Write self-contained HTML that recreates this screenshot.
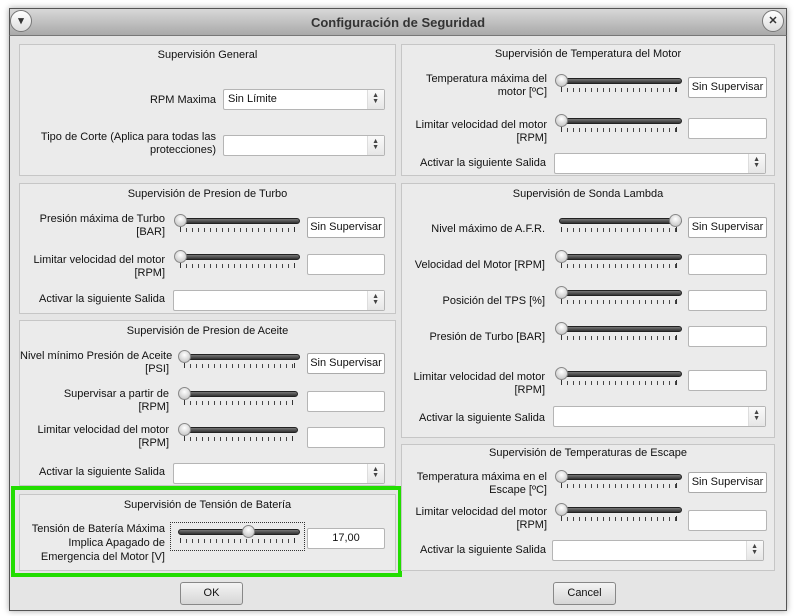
<!DOCTYPE html>
<html><head><meta charset="utf-8"><style>
*{box-sizing:border-box;margin:0;padding:0}
body{width:794px;height:616px;background:#fff;font-family:"Liberation Sans",sans-serif;font-size:11px;color:#111;position:relative;overflow:hidden}
.win{position:absolute;left:9px;top:8px;width:778px;height:603px;border:1px solid #555;background:#e5e5e5;box-shadow:0 0 6px rgba(0,0,0,.35)}
.title{position:absolute;left:9px;top:8px;width:778px;height:28px;background:linear-gradient(#d8d8d8,#a9a9a9);border:1px solid #555;border-bottom:1px solid #777;text-align:center;line-height:27px;font-weight:bold;font-size:13px;color:#333}
.circ{position:absolute;width:22px;height:22px;border-radius:50%;background:linear-gradient(#fff,#ddd);border:1px solid #777;text-align:center;line-height:20px;font-size:11px;color:#333;font-weight:bold}
.g{position:absolute;border:1px solid #c6c6c6;background:#ebebeb}
.gt{position:absolute;text-align:center;white-space:nowrap}
.l{position:absolute;text-align:right;line-height:13px;white-space:nowrap;top:0}
.cb{position:absolute;background:#fff;border:1px solid #b5b5b5;border-radius:2px;padding-left:4px;line-height:19px}
.cb:after{content:"";position:absolute;right:0;top:0;width:16px;height:100%;border-left:1px solid #ddd;background:linear-gradient(#fafafa,#e6e6e6)}
.cb i{position:absolute;right:5px;top:3px;font-style:normal;font-size:7px;line-height:6px;color:#444;z-index:2}
.btn{position:absolute;background:#fff;border:1px solid #aaa;border-radius:2px;text-align:center;line-height:19px;white-space:nowrap}
.inp{position:absolute;background:#fff;border:1px solid #b5b5b5;border-radius:2px}
.sl{position:absolute;height:20px}
.sl .gr{position:absolute;left:4px;right:0;top:4px;height:6px;border-radius:3px;background:linear-gradient(#777,#333);border:1px solid #222}
.sl .kn{position:absolute;top:0;width:13px;height:13px;border-radius:50%;background:radial-gradient(circle at 50% 35%,#fff,#bbb);border:1px solid #888}
.sl .tk{position:absolute;left:6px;right:5px;top:14px;height:4px;background:repeating-linear-gradient(90deg,#444 0 1px,transparent 1px 6px)}
.sl .tk:before,.sl .tk:after{content:"";position:absolute;top:-1px;width:1px;height:5px;background:#333}
.sl .tk:before{left:0}.sl .tk:after{right:0}
.pb{position:absolute;border-radius:3px;background:linear-gradient(#f4f4f4,#d6d6d6);border:1px solid #888;text-align:center;line-height:21px}
</style></head><body>
<div class="win"></div>
<div class="title">Configuración de Seguridad</div>
<div class="circ" style="left:10px;top:10px">▾</div>
<div class="circ" style="left:762px;top:10px">✕</div>

<div class="g" style="left:19px;top:44px;width:377px;height:132px"></div>
<div class="gt" style="left:19px;top:49px;width:377px">Supervisión General</div>
<div class="l" style="left:20px;top:94px;width:196px">RPM Maxima</div>
<div class="cb" style="left:223px;top:89px;width:162px;height:21px">Sin Límite<i>▲<br>▼</i></div>
<div class="l" style="left:20px;top:131px;width:196px">Tipo de Corte (Aplica para todas las<br>protecciones)</div>
<div class="cb" style="left:223px;top:135px;width:162px;height:21px"><i>▲<br>▼</i></div>

<div class="g" style="left:19px;top:183px;width:377px;height:131px"></div>
<div class="gt" style="left:19px;top:188px;width:377px">Supervisión de Presion de Turbo</div>
<div class="l" style="left:20px;top:213px;width:145px">Presión máxima de Turbo<br>[BAR]</div>
<div class="sl" style="left:174px;top:214px;width:126px"><div class="gr"></div><div class="tk"></div><div class="kn" style="left:0"></div></div>
<div class="btn" style="left:307px;top:217px;width:78px;height:21px">Sin Supervisar</div>
<div class="l" style="left:20px;top:254px;width:145px">Limitar velocidad del motor<br>[RPM]</div>
<div class="sl" style="left:174px;top:250px;width:126px"><div class="gr"></div><div class="tk"></div><div class="kn" style="left:0"></div></div>
<div class="inp" style="left:307px;top:254px;width:78px;height:21px"></div>
<div class="l" style="left:20px;top:293px;width:145px">Activar la siguiente Salida</div>
<div class="cb" style="left:173px;top:290px;width:212px;height:21px"><i>▲<br>▼</i></div>

<div class="g" style="left:19px;top:320px;width:377px;height:166px"></div>
<div class="gt" style="left:19px;top:325px;width:377px">Supervisión de Presion de Aceite</div>
<div class="l" style="left:20px;top:350px;width:149px">Nivel mínimo Presión de Aceite<br>[PSI]</div>
<div class="sl" style="left:178px;top:350px;width:122px"><div class="gr"></div><div class="tk"></div><div class="kn" style="left:0"></div></div>
<div class="btn" style="left:307px;top:353px;width:78px;height:21px">Sin Supervisar</div>
<div class="l" style="left:20px;top:388px;width:149px">Supervisar a partir de<br>[RPM]</div>
<div class="sl" style="left:178px;top:387px;width:120px"><div class="gr"></div><div class="tk"></div><div class="kn" style="left:0"></div></div>
<div class="inp" style="left:307px;top:391px;width:78px;height:21px"></div>
<div class="l" style="left:20px;top:424px;width:149px">Limitar velocidad del motor<br>[RPM]</div>
<div class="sl" style="left:178px;top:423px;width:120px"><div class="gr"></div><div class="tk"></div><div class="kn" style="left:0"></div></div>
<div class="inp" style="left:307px;top:427px;width:78px;height:21px"></div>
<div class="l" style="left:20px;top:466px;width:145px">Activar la siguiente Salida</div>
<div class="cb" style="left:173px;top:463px;width:212px;height:21px"><i>▲<br>▼</i></div>

<div style="position:absolute;left:11px;top:486px;width:391px;height:91px;border:4px solid #22dd00"></div>
<div class="g" style="left:19px;top:494px;width:377px;height:77px"></div>
<div class="gt" style="left:19px;top:499px;width:377px">Supervisión de Tensión de Batería</div>
<div class="l" style="left:20px;top:522px;width:145px;line-height:14px">Tensión de Batería Máxima<br>Implica Apagado de<br>Emergencia del Motor [V]</div>
<div style="position:absolute;left:170px;top:522px;width:135px;height:29px;border:1px dotted #333"></div>
<div class="sl" style="left:174px;top:525px;width:126px"><div class="gr"></div><div class="tk"></div><div class="kn" style="left:68px"></div></div>
<div class="inp" style="left:307px;top:528px;width:78px;height:21px;text-align:center;line-height:19px">17,00</div>

<div class="g" style="left:401px;top:44px;width:374px;height:132px"></div>
<div class="gt" style="left:401px;top:48px;width:374px">Supervisión de Temperatura del Motor</div>
<div class="l" style="left:402px;top:73px;width:145px">Temperatura máxima del<br>motor [ºC]</div>
<div class="sl" style="left:555px;top:74px;width:127px"><div class="gr"></div><div class="tk"></div><div class="kn" style="left:0"></div></div>
<div class="btn" style="left:688px;top:77px;width:79px;height:21px">Sin Supervisar</div>
<div class="l" style="left:402px;top:119px;width:145px">Limitar velocidad del motor<br>[RPM]</div>
<div class="sl" style="left:555px;top:114px;width:127px"><div class="gr"></div><div class="tk"></div><div class="kn" style="left:0"></div></div>
<div class="inp" style="left:688px;top:118px;width:79px;height:21px"></div>
<div class="l" style="left:402px;top:157px;width:144px">Activar la siguiente Salida</div>
<div class="cb" style="left:554px;top:153px;width:212px;height:21px"><i>▲<br>▼</i></div>

<div class="g" style="left:401px;top:183px;width:374px;height:255px"></div>
<div class="gt" style="left:401px;top:188px;width:374px">Supervisión de Sonda Lambda</div>
<div class="l" style="left:402px;top:223px;width:143px">Nivel máximo de A.F.R.</div>
<div class="sl" style="left:555px;top:214px;width:127px"><div class="gr"></div><div class="tk"></div><div class="kn" style="left:114px"></div></div>
<div class="btn" style="left:688px;top:217px;width:79px;height:21px">Sin Supervisar</div>
<div class="l" style="left:402px;top:259px;width:143px">Velocidad del Motor [RPM]</div>
<div class="sl" style="left:555px;top:250px;width:127px"><div class="gr"></div><div class="tk"></div><div class="kn" style="left:0"></div></div>
<div class="inp" style="left:688px;top:254px;width:79px;height:21px"></div>
<div class="l" style="left:402px;top:295px;width:143px">Posición del TPS [%]</div>
<div class="sl" style="left:555px;top:286px;width:127px"><div class="gr"></div><div class="tk"></div><div class="kn" style="left:0"></div></div>
<div class="inp" style="left:688px;top:290px;width:79px;height:21px"></div>
<div class="l" style="left:402px;top:331px;width:143px">Presión de Turbo [BAR]</div>
<div class="sl" style="left:555px;top:322px;width:127px"><div class="gr"></div><div class="tk"></div><div class="kn" style="left:0"></div></div>
<div class="inp" style="left:688px;top:326px;width:79px;height:21px"></div>
<div class="l" style="left:402px;top:371px;width:143px">Limitar velocidad del motor<br>[RPM]</div>
<div class="sl" style="left:555px;top:367px;width:127px"><div class="gr"></div><div class="tk"></div><div class="kn" style="left:0"></div></div>
<div class="inp" style="left:688px;top:370px;width:79px;height:21px"></div>
<div class="l" style="left:402px;top:412px;width:143px">Activar la siguiente Salida</div>
<div class="cb" style="left:553px;top:406px;width:213px;height:21px"><i>▲<br>▼</i></div>

<div class="g" style="left:401px;top:444px;width:374px;height:127px"></div>
<div class="gt" style="left:401px;top:447px;width:374px">Supervisión de Temperaturas de Escape</div>
<div class="l" style="left:402px;top:471px;width:145px">Temperatura máxima en el<br>Escape [ºC]</div>
<div class="sl" style="left:555px;top:470px;width:127px"><div class="gr"></div><div class="tk"></div><div class="kn" style="left:0"></div></div>
<div class="btn" style="left:688px;top:472px;width:79px;height:21px">Sin Supervisar</div>
<div class="l" style="left:402px;top:506px;width:145px">Limitar velocidad del motor<br>[RPM]</div>
<div class="sl" style="left:555px;top:503px;width:127px"><div class="gr"></div><div class="tk"></div><div class="kn" style="left:0"></div></div>
<div class="inp" style="left:688px;top:510px;width:79px;height:21px"></div>
<div class="l" style="left:402px;top:544px;width:144px">Activar la siguiente Salida</div>
<div class="cb" style="left:552px;top:540px;width:212px;height:21px"><i>▲<br>▼</i></div>

<div class="pb" style="left:180px;top:582px;width:63px;height:23px">OK</div>
<div class="pb" style="left:553px;top:582px;width:63px;height:23px">Cancel</div>
</body></html>
